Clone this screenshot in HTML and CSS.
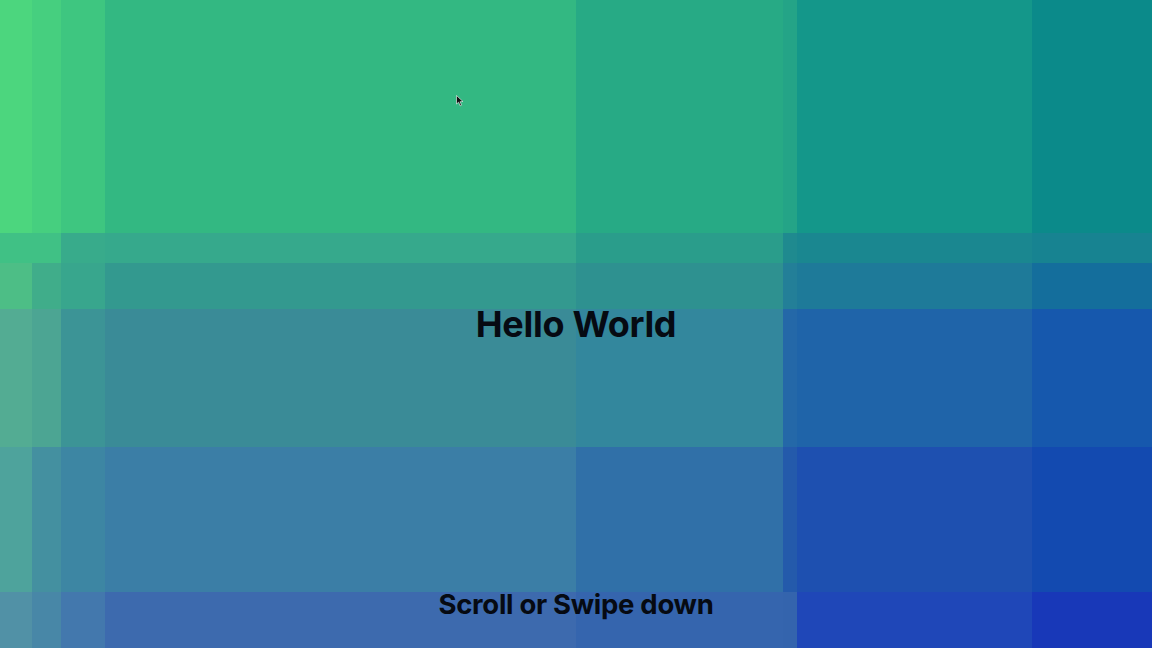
FILE: index.html
```html
<!DOCTYPE html>
<html lang="en">
<head>
<meta charset="utf-8">
<title>Hello World</title>
<link rel="stylesheet" href="styles.css">
</head>
<body>
<main class="stage">
  <div class="mosaic" aria-hidden="true">
    <i style="background:#4cd67e"></i><i style="background:#46cf7f"></i><i style="background:#3ec680"></i><i style="background:#33b882"></i><i style="background:#27aa85"></i><i style="background:#24a487"></i><i style="background:#14978a"></i><i style="background:#0b8a8a"></i>
    <i style="background:#40c185"></i><i style="background:#40c185"></i><i style="background:#38ab8b"></i><i style="background:#36a98c"></i><i style="background:#2a9d8b"></i><i style="background:#1f8a8f"></i><i style="background:#1a8790"></i><i style="background:#178391"></i>
    <i style="background:#4dbe86"></i><i style="background:#40ad8a"></i><i style="background:#38a68d"></i><i style="background:#33998f"></i><i style="background:#2e9190"></i><i style="background:#237f98"></i><i style="background:#1e7a99"></i><i style="background:#146e9c"></i>
    <i style="background:#53ac93"></i><i style="background:#4ca593"></i><i style="background:#3c9496"></i><i style="background:#3a8b97"></i><i style="background:#33879d"></i><i style="background:#2468a8"></i><i style="background:#1f64a9"></i><i style="background:#1658ad"></i>
    <i style="background:#4ea39c"></i><i style="background:#4490a0"></i><i style="background:#3d86a3"></i><i style="background:#3b7ea6"></i><i style="background:#3070a8"></i><i style="background:#245aab"></i><i style="background:#1e50b0"></i><i style="background:#134ab0"></i>
    <i style="background:#5191a6"></i><i style="background:#4887a7"></i><i style="background:#4378ad"></i><i style="background:#3d6aae"></i><i style="background:#3565ae"></i><i style="background:#3464ad"></i><i style="background:#1f47b8"></i><i style="background:#1838b8"></i>
  </div>
  <h1 class="title">Hello World</h1>
  <p class="hint">Scroll or Swipe down</p>
  <svg class="cursor" width="8" height="12" viewBox="0 0 8 12" aria-hidden="true"><path d="M0.5 0.5 L0.5 9 L2.6 7.2 L4.2 10.8 L5.6 10.2 L4.1 6.7 L7 6.6 Z" fill="#111" stroke="#fff" stroke-width="0.6"/></svg>
</main>
</body>
</html>
```
FILE: styles.css
```css
html, body {
  margin: 0;
  padding: 0;
  height: 100%;
  overflow: hidden;
}
body {
  font-family: Inter, "Liberation Sans", sans-serif;
  color: #060a12;
}
.stage {
  position: relative;
  height: 100vh;
  display: flex;
  flex-direction: column;
  align-items: center;
  justify-content: center;
}
.mosaic {
  position: absolute;
  inset: 0;
  z-index: 0;
  display: grid;
  grid-template-columns: 32px 29px 44px 471px 207px 14px 235px 120px;
  grid-template-rows: 233px 30px 46px 138px 145px 56px;
}
.mosaic i {
  display: block;
}
.title {
  position: relative;
  z-index: 1;
  margin: 0;
  font-size: 36px;
  font-weight: 700;
  letter-spacing: -0.3px;
  line-height: 44px;
}
.hint {
  position: absolute;
  z-index: 1;
  bottom: 26px;
  left: 0;
  right: 0;
  margin: 0;
  text-align: center;
  font-size: 27.5px;
  font-weight: 700;
  letter-spacing: -0.3px;
  line-height: 36px;
}
.cursor {
  position: absolute;
  z-index: 2;
  left: 456px;
  top: 95px;
}
```
